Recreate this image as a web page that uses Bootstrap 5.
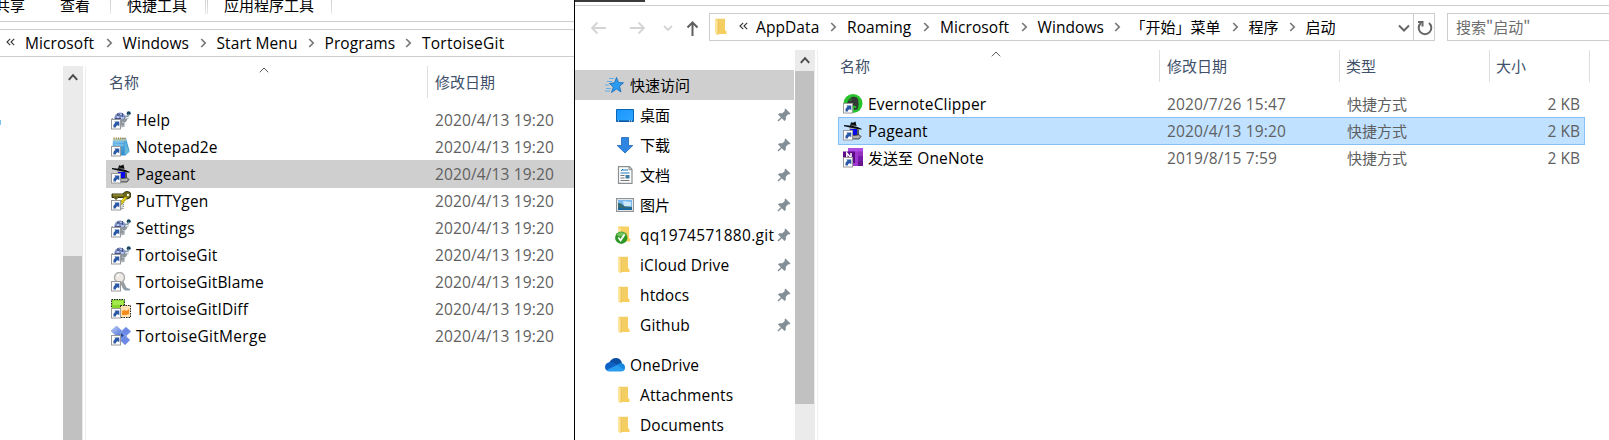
<!DOCTYPE html>
<html lang="zh-CN">
<head>
<meta charset="utf-8">
<title>启动</title>
<link rel="stylesheet" href="https://cdn.jsdelivr.net/npm/bootstrap@5.3.0/dist/css/bootstrap.min.css">
<script src="https://cdn.jsdelivr.net/npm/bootstrap@5.3.0/dist/js/bootstrap.bundle.min.js"></script>
<style>
body{width:1609px;height:440px;overflow:hidden;background:#fff;color:#000;font-family:"Open Sans","Noto Sans CJK SC",sans-serif;font-size:15.5px;line-height:20px;white-space:nowrap}
svg{display:block;flex:none}
.zh{font-family:"Noto Sans CJK SC",sans-serif;font-size:15px;letter-spacing:0}
.win-left{width:574px;height:440px}
.win-right{width:1035px;height:440px;border-left:1px solid #000}
.ribbon{height:22px;border-bottom:1px solid #cdcdcd}
.ribbon span{line-height:20px;margin-top:-5px;flex:none}
.ribbon .r1{width:65px;margin-left:-5px}.ribbon .r2{width:50px}.ribbon .r3{width:94px}.ribbon .r4{width:123px}
.ribbon i{width:1px;height:14px;flex:none;background:linear-gradient(#d0d0d0,#e6e6e6)}
.addr-left{height:28px;margin-top:7px;border-top:1px solid #cdcdcd;border-bottom:1px solid #cdcdcd}
.addr-left,.box{padding-bottom:1px}
.crumb{display:flex;align-items:center;letter-spacing:.08px}
.crumb.zh{letter-spacing:0}
.crumb svg{margin-left:auto;margin-right:10px}
.w91{width:91px}.w93{width:93px}.w94{width:94px}.w97{width:97.5px}.w108{width:108px}.w118{width:118px}.w57{width:57px}
.tree-left{width:63px}
.sbar{width:20px;background:#ebebeb}
.thumb{width:19px;background:#c1c1c1}
.gutter{width:3px;margin-right:0;border-right:1px solid #efefef}
.files-left{width:468px;margin-left:20px}
.hd{color:#40506a}
.hd>div{height:32px;border-right:1px solid #dedede;position:relative;line-height:32px}
.hd .caret{position:absolute;top:1px}
.g-left{display:grid;grid-template-columns:322px 1fr}
.g-right{display:grid;grid-template-columns:322px 180px 150px 100px}
.item{height:28px;margin-bottom:-1px;align-items:center;border:1px solid transparent;position:relative}
.item>:first-child{display:flex;align-items:center;padding-left:4px;gap:5px;letter-spacing:.15px}
.item>:not(:first-child){padding-left:6px;color:#5f5f5f}
.item>.size{padding-left:0;padding-right:7px;text-align:right;width:96px}
.item.off{background:#cfcfcf}
.item.on{background:#c0e1ff;border-color:#85c1f7}
.item>.date{letter-spacing:.13px}
.topbar{height:6px;border-bottom:1px solid #cdcdcd}
.topbar div{width:70px;height:2px;background:#3b3b3b}
.box{height:28px;border:1px solid #cdcdcd}
.navrow{margin-top:7px;height:28px}
.side{width:219px;letter-spacing:.12px}
.side>div{height:30px;display:flex;align-items:center}
.side .top{padding-left:30px;gap:5px}
.side .top.sel{background:#cfcfcf}
.side .sub{padding-left:40px;gap:5px}
.side .long{letter-spacing:.3px}
.side .pin{position:absolute;left:777px}
.dot{width:1px;height:5px;background:#7cc4ee;margin-top:54px}
</style>
</head>
<body class="d-flex">
<svg width="0" height="0" class="position-absolute">
<defs>
<linearGradient id="gf" x1="0" x2="1" y2="1"><stop offset="0" stop-color="#f0cd6a"/><stop offset="1" stop-color="#f8cf5c"/></linearGradient>
<linearGradient id="gb" x1="0" x2="1" y2="1"><stop offset="0" stop-color="#80c5ef"/><stop offset="1" stop-color="#1c7fc4"/></linearGradient>
<linearGradient id="gd" x1="0" x2="1" y2="1"><stop offset="0" stop-color="#1a97ff"/><stop offset="1" stop-color="#2ea5ff"/></linearGradient>
<linearGradient id="gm" x1="0" x2="1" y2="1"><stop offset="0" stop-color="#c4d2f5"/><stop offset="1" stop-color="#4a6fd8"/></linearGradient>
<symbol id="sc" viewBox="0 0 20 20"><rect x=".5" y="9.500" width="9" height="9.500" fill="#fff" stroke="#9a9a9a"/><path d="M2.500 17.500c-.4-2.500.4-4 2-4.500L3.300 11.500h5v5L7 15.200C5.500 15.500 4.800 16.300 4.800 17.500z" fill="#2a58a5"/></symbol>
<symbol id="tortoise" viewBox="0 0 20 20"><path d="M3 9Q4 2.500 9 2.500T15 9l-1 3H4z" fill="#8090c4"/><path d="M4 8.500h10M6 5h6M7 3v6M11.500 3v7" stroke="#465484" fill="none"/><path d="M6 6h2v2H6zM9 4h2v1H9zM10 7h3v2h-3z" fill="#b3c3ee"/><circle cx="17.700" cy="3.300" r="2" fill="#164461"/><path d="M14 6.500l3-.5 1-2M2 8.500l-2 1.500" stroke="#8293a5" stroke-width="1.500" fill="none"/><path d="M9 10l4-1.500 4-.5-1.500 3-2 2v3.500l-3 1z" fill="#8e959d"/><path d="M14 8.500l4-.5M11 12l3 1M10 16h4" stroke="#bec8cf"/><use href="#sc"/></symbol>
<symbol id="notepad" viewBox="0 0 20 20"><path d="M2 2l13-1 3.500 13-4 4.500H1z" fill="url(#gb)"/><path d="M14 4l4.500 11-5 3z" fill="#67b7da"/><path d="M4 5h9M4 8h9" stroke="#91d0f3"/><path d="M2.500 1.500h12" stroke="#a8813b" stroke-width="2" stroke-dasharray="1.200 1"/><path d="M2 3h13" stroke="#e5dc9b"/><use href="#sc"/></symbol>
<symbol id="pageant" viewBox="0 0 20 20"><path d="M6 6h10l-1 10-8 1z" fill="#aaa"/><path d="M7 8h7v6H9z" fill="#0808f0"/><path d="M14 8l2 1v6l-2 1z" fill="#555"/><path d="M9 15l7-1.500 2 2-2 2.500H9z" fill="#999" stroke="#333" stroke-width=".8"/><path d="M10 16h6" stroke="#ccc"/><path d="M7 5L8 1.300l2 .5 2.500-1.300 1 4.500z" fill="#0a0d10"/><path d="M1 4l7 .8 5 .8 5.500 2.200v1L12 7.500 1 5.300z" fill="#0a0d10"/><path d="M8 4l5 1" stroke="#888" stroke-width=".7"/><use href="#sc"/></symbol>
<symbol id="puttygen" viewBox="0 0 20 20"><path d="M1 3h11q1-2.500 4-2.500 4 0 4 3.500t-4 4q-3 0-4-1.500H7l-2 2-2-2H1z" fill="#6b6919" stroke="#35340d"/><path d="M2 4h10" stroke="#aaa349"/><circle cx="17" cy="4" r="1.200" fill="#fff"/><path d="M8 10h5l-1 8H9z" fill="#d7d7d7" stroke="#777" stroke-dasharray="1 1"/><path d="M14 6l-5 5 2.500-.5L9 15l5.500-6-2 .5 4-3z" fill="#ffed19" stroke="#928a00" stroke-width=".6"/><use href="#sc"/></symbol>
<symbol id="blame" viewBox="0 0 20 20"><path d="M12 8l4 9-3 1-4-7z" fill="#9b9d9f"/><path d="M11 15l4 .5 4 1.500v1.500h-5z" fill="#8d9ead"/><circle cx="8.500" cy="5.500" r="5" fill="#eeeae3" stroke="#afb0b0" stroke-width="1.500"/><path d="M6 4l2-1.500" stroke="#fff" stroke-width="2"/><use href="#sc"/></symbol>
<symbol id="idiff" viewBox="0 0 20 20"><path d="M.5 .5h13v12H.5z" fill="#87d52b" stroke="#222" stroke-dasharray="1.500 1"/><path d="M2 2h10v4H2z" fill="#a5ea4d"/><path d="M9.500 6.500h10v12h-10z" fill="#ffe0b0" stroke="#222" stroke-dasharray="1.500 1"/><path d="M11 16v-4l3-1 1.500 1 2.500-2v5l-3 1z" fill="#f58b1b"/><use href="#sc"/></symbol>
<symbol id="merge" viewBox="0 0 20 20"><path d="M10 6l4 4-5 5M6 7l9 9" stroke="#4771d2" stroke-width="3"/><g fill="url(#gm)" stroke="#7e9de1" stroke-width=".7"><path d="M5.500 0L11 5 5.500 10 0 5z"/></g><path d="M15 1l5 4.500-5 4.500-5-4.500zM14 9.500l5 4.500-5 5-5-5z" fill="#6a88e4" stroke="#9db4ee" stroke-width=".7"/><use href="#sc"/></symbol>
<symbol id="evernote" viewBox="0 0 20 20"><circle cx="10" cy="9.500" r="9.500" fill="#27c32d"/><path d="M5 6.500L8.500 3q5-1 6.500 2 1.200 5 0 9.500-1 2-4 1v-2l2 .5.300-1.500-2.500-1-2 1.500-4-1q-1.300-3 .2-5.500z" fill="#333a36"/><path d="M5.500 6.500H8V4" stroke="#27a932" fill="none" stroke-width=".6"/><use href="#sc"/></symbol>
<symbol id="onenote" viewBox="0 0 20 20"><path d="M5 0h15v18H5z" fill="#ae4be5"/><path d="M15 3.500h5V8h-5z" fill="#9332bf"/><path d="M15 8h5v5h-5z" fill="#7719aa"/><path d="M5 13h15v5H5z" fill="#67158f"/><path d="M5 3.500h10V18H5z" fill="#9c37cf"/><path d="M0 3.500h12V15H0z" fill="#5c0b86"/><path d="M3.800 10V5l4.200 5V5" stroke="#fff" stroke-width="1.500" fill="none"/><use href="#sc"/></symbol>
<symbol id="folder" viewBox="0 0 18 18"><path d="M2.500.8H12V12l1.500 1.500V16H5z" fill="url(#gf)"/><path d="M2 1l3 2v14.500l-3-2z" fill="#ffe599"/><path d="M5 3v14" stroke="#e5bb51" stroke-width=".7"/></symbol>
<symbol id="chev" viewBox="0 0 7 10"><path d="M1.200 1l4 4-4 4" fill="none" stroke="#777" stroke-width="1.700"/></symbol>
<symbol id="pin" viewBox="0 0 14 14"><path d="M8.500.5l5 5-1.300 1-1-.2-2.400 2.400v3L7.500 13 4.800 10.200 1.500 13.500.5 12.500 3.800 9.200 1 6.500l1.300-1.200h3l2.500-2.400-.3-1.200z" fill="#838f96"/></symbol>
<symbol id="caret" viewBox="0 0 10 6"><path d="M.8 5.300L5 1l4.200 4.300" fill="none" stroke="#5c5c5c" stroke-width="1"/></symbol>
<symbol id="up" viewBox="0 0 10 8"><path d="M.8 6.800L5 2.200l4.200 4.600" fill="none" stroke="#4b4b4b" stroke-width="2"/></symbol>
<symbol id="laquo" viewBox="0 0 9 8"><path d="M4.200.8L1 4l3.200 3.200M8.200.8L5 4l3.200 3.200" fill="none" stroke="#333" stroke-width="1.100"/></symbol>
</defs>
</svg>

<section class="win-left d-flex flex-column overflow-hidden flex-shrink-0">
  <div class="ribbon d-flex zh overflow-hidden flex-shrink-0"><span class="r1">共享</span><span class="r2">查看</span><i></i><span class="r3 ps-3">快捷工具</span><i></i><i style="margin-left:1px"></i><span class="r4 ps-3">应用程序工具</span><i></i></div>
  <nav class="addr-left d-flex align-items-center flex-shrink-0">
    <svg width="9" height="8" style="margin:0 10px 1px 6px"><use href="#laquo"/></svg>
    <div class="crumb w97">Microsoft<svg width="7" height="10"><use href="#chev"/></svg></div>
    <div class="crumb w94">Windows<svg width="7" height="10"><use href="#chev"/></svg></div>
    <div class="crumb w108">Start Menu<svg width="7" height="10"><use href="#chev"/></svg></div>
    <div class="crumb w97">Programs<svg width="7" height="10"><use href="#chev"/></svg></div>
    <div class="crumb" style="letter-spacing:.25px">TortoiseGit</div>
  </nav>
  <div class="d-flex flex-grow-1" style="margin-top:9px">
    <div class="tree-left"><div class="dot"></div></div>
    <div class="sbar d-flex flex-column"><svg width="10" height="8" class="mx-auto" style="margin-top:7px"><use href="#up"/></svg><div class="thumb mt-auto" style="height:184px"></div></div>
    <div class="gutter"></div>
    <div class="files-left">
      <div class="hd g-left zh"><div style="padding-left:3px">名称<svg class="caret" style="left:153px" width="10" height="6"><use href="#caret"/></svg></div><div class="border-0" style="padding-left:7px">修改日期</div></div>
      <div style="margin-top:8px">
        <div class="item g-left"><div><svg width="20" height="20"><use href="#tortoise"/></svg>Help</div><div class="date">2020/4/13 19:20</div></div>
        <div class="item g-left"><div><svg width="20" height="20"><use href="#notepad"/></svg>Notepad2e</div><div class="date">2020/4/13 19:20</div></div>
        <div class="item g-left off"><div><svg width="20" height="20"><use href="#pageant"/></svg>Pageant</div><div class="date">2020/4/13 19:20</div></div>
        <div class="item g-left"><div><svg width="20" height="20"><use href="#puttygen"/></svg>PuTTYgen</div><div class="date">2020/4/13 19:20</div></div>
        <div class="item g-left"><div><svg width="20" height="20"><use href="#tortoise"/></svg>Settings</div><div class="date">2020/4/13 19:20</div></div>
        <div class="item g-left"><div><svg width="20" height="20"><use href="#tortoise"/></svg>TortoiseGit</div><div class="date">2020/4/13 19:20</div></div>
        <div class="item g-left"><div><svg width="20" height="20"><use href="#blame"/></svg>TortoiseGitBlame</div><div class="date">2020/4/13 19:20</div></div>
        <div class="item g-left"><div><svg width="20" height="20"><use href="#idiff"/></svg>TortoiseGitIDiff</div><div class="date">2020/4/13 19:20</div></div>
        <div class="item g-left"><div style="letter-spacing:.3px"><svg width="20" height="20"><use href="#merge"/></svg>TortoiseGitMerge</div><div class="date">2020/4/13 19:20</div></div>
      </div>
    </div>
  </div>
</section>

<section class="win-right d-flex flex-column overflow-hidden flex-shrink-0">
  <div class="topbar flex-shrink-0"><div></div></div>
  <div class="navrow d-flex align-items-center flex-shrink-0">
    <svg width="134" height="28" viewBox="575 13 134 28" fill="none" stroke="#d4d4d4" stroke-width="1.800"><path d="M606 28H592.500M597.500 22.500L592 28l5.500 5.500M630 28h13.500M638.500 22.500L644 28l-5.500 5.500M664 26l4 4 4-4"/><path d="M692.500 36V22.500M687.500 27.500l5-5 5 5" stroke="#5f5f5f" stroke-width="2"/></svg>
    <div class="box d-flex align-items-center" style="width:726px">
      <svg width="18" height="18" style="margin:0 11px 0 3px"><use href="#folder"/></svg>
      <svg width="9" height="8" style="margin:0 8px 1px -3px"><use href="#laquo"/></svg>
      <div class="crumb w91">AppData<svg width="7" height="10"><use href="#chev"/></svg></div>
      <div class="crumb w93">Roaming<svg width="7" height="10"><use href="#chev"/></svg></div>
      <div class="crumb w97">Microsoft<svg width="7" height="10"><use href="#chev"/></svg></div>
      <div class="crumb w93">Windows<svg width="7" height="10"><use href="#chev"/></svg></div>
      <div class="crumb w118 zh">「开始」菜单<svg width="7" height="10"><use href="#chev"/></svg></div>
      <div class="crumb w57 zh">程序<svg width="7" height="10"><use href="#chev"/></svg></div>
      <div class="crumb zh">启动</div>
      <svg class="ms-auto" width="36" height="26" viewBox="1398 14 36 26" fill="none" stroke="#666" stroke-width="2"><path d="M1399 25.500l5 5 5-5"/><path d="M1413.500 14v26" stroke="#cdcdcd" stroke-width="1"/><path d="M1421 23a6.300 6.300 0 1 0 8 0"/><path d="M1418 22h4.500v4.500"/></svg>
    </div>
    <div class="box zh d-flex align-items-center ps-2 flex-grow-1" style="margin-left:12px;color:#6d6d6d;border-right:0"><span>搜索"启动"</span></div>
  </div>
  <div class="d-flex flex-grow-1" style="margin-top:9px">
    <div class="side" style="padding-top:20px">
      <div class="top sel"><svg width="20" height="18" viewBox="0 0 20 18"><path d="M11.500 1.500l2 5 5 .3-4 3.500 1.500 5.700-4.500-3-5 3.500L8.300 11 4.500 7.500l5-.7z" fill="#2b9cf2" stroke="#1369b5" stroke-width=".8"/><path d="M4 2.500h5M2 5.500h5M0 9h4M1 12.500h5M0 15h5" stroke="#65aee5"/></svg><span class="zh">快速访问</span></div>
      <div class="sub"><svg width="20" height="18" viewBox="0 0 20 18"><path d="M1.500 3.500h17v12h-17z" fill="url(#gd)" stroke="#0965b5"/><path d="M2 15h16" stroke="#074a8b"/><path d="M3 15h1m10 0h1m1 0h1" stroke="#fff"/></svg><span class="zh">桌面</span><svg class="pin" width="14" height="14"><use href="#pin"/></svg></div>
      <div class="sub"><svg width="20" height="18" viewBox="0 0 20 18"><path d="M6.500 1.500h7v8h4.300l-7.800 7.500-7.800-7.500h4.300z" fill="#2f86e2" stroke="#1a66b5" stroke-width=".8"/></svg><span class="zh">下载</span><svg class="pin" width="14" height="14"><use href="#pin"/></svg></div>
      <div class="sub"><svg width="20" height="18" viewBox="0 0 20 18"><path d="M3.500.7h11l2.500 2.800v13.800H3.500z" fill="#fff" stroke="#8a8f92" stroke-width="1.200"/><path d="M14 .7v3h3" fill="none" stroke="#8a8f92"/><path d="M6 5l2-2v2m1-1h4M5.500 7h9" stroke="#1977bd" fill="none"/><path d="M5.500 9.500h4M5.500 12h4M5.500 14.500h9" stroke="#777"/><path d="M10.500 9h4v3.500h-4z" fill="#3c7aa4"/></svg><span class="zh">文档</span><svg class="pin" width="14" height="14"><use href="#pin"/></svg></div>
      <div class="sub"><svg width="20" height="18" viewBox="0 0 20 18"><path d="M1.600 2.600h16.800v12.800H1.600z" fill="#fff" stroke="#8f9498" stroke-width="1.200"/><path d="M3 4h14v10H3z" fill="#78b7ed"/><path d="M8 5l8 1v4H9z" fill="#cce8f8"/><path d="M3 7l3 .5 4 3 7 .5v3H3z" fill="#356c74"/><path d="M3 12h14v2H3z" fill="#18669e"/></svg><span class="zh">图片</span><svg class="pin" width="14" height="14"><use href="#pin"/></svg></div>
      <div class="sub"><svg width="20" height="18" viewBox="0 0 20 18"><path d="M3 .5h11v11l1.300 1.500v2.500H3z" fill="#f7cf62"/><path d="M3 1l3 2v12H3z" fill="#ffe599"/><circle cx="6.300" cy="11.700" r="6.200" fill="#2d9726"/><path d="M1.500 9a5 4 0 0 1 9.500 0q-5 3-9.500 0" fill="#70c45b"/><path d="M3.300 11.500l2.300 3L9.500 8.500" fill="none" stroke="#fff" stroke-width="1.800"/></svg><span class="long">qq1974571880.git</span><svg class="pin" width="14" height="14"><use href="#pin"/></svg></div>
      <div class="sub"><svg width="20" height="18" viewBox="-1 0 20 18"><use href="#folder" width="18" height="18"/></svg><span>iCloud Drive</span><svg class="pin" width="14" height="14"><use href="#pin"/></svg></div>
      <div class="sub"><svg width="20" height="18" viewBox="-1 0 20 18"><use href="#folder" width="18" height="18"/></svg><span>htdocs</span><svg class="pin" width="14" height="14"><use href="#pin"/></svg></div>
      <div class="sub"><svg width="20" height="18" viewBox="-1 0 20 18"><use href="#folder" width="18" height="18"/></svg><span>Github</span><svg class="pin" width="14" height="14"><use href="#pin"/></svg></div>
      <div class="top" style="margin-top:10px"><svg width="20" height="14" viewBox="0 0 20 14"><path d="M4 5q2.500-5 7-5 4.500 0 6 5l-7 4z" fill="#0b4ea3"/><path d="M4.500 13Q0 13 0 9t5-5q3-.5 7 3L8 12z" fill="#0f62c5"/><path d="M12 6.500L16 5q4 .5 4 4.500t-4 3.500h-4z" fill="#1687de"/><path d="M1.500 12L12 7l7.500 4.500Q18.500 13.500 16 13.500H4.500q-2 0-3-1.500z" fill="#2b9df0"/></svg><span>OneDrive</span></div>
      <div class="sub"><svg width="20" height="18" viewBox="-1 0 20 18"><use href="#folder" width="18" height="18"/></svg><span>Attachments</span></div>
      <div class="sub"><svg width="20" height="18" viewBox="-1 0 20 18"><use href="#folder" width="18" height="18"/></svg><span>Documents</span></div>
    </div>
    <div class="sbar d-flex flex-column" style="margin-left:1px"><svg width="10" height="8" class="mx-auto" style="margin-top:6px;margin-bottom:7px"><use href="#up"/></svg><div class="thumb" style="height:333px"></div></div>
    <div class="gutter"></div>
    <div style="width:771px;margin-left:20px">
      <div class="hd g-right zh"><div style="padding-left:2px">名称<svg class="caret" style="left:153px" width="10" height="6"><use href="#caret"/></svg></div><div style="padding-left:7px">修改日期</div><div style="padding-left:6px">类型</div><div style="padding-left:6px">大小</div></div>
      <div style="margin-top:8px;width:747px">
        <div class="item g-right"><div><svg width="20" height="20"><use href="#evernote"/></svg>EvernoteClipper</div><div class="date">2020/7/26 15:47</div><div class="zh">快捷方式</div><div class="size">2 KB</div></div>
        <div class="item g-right on"><div><svg width="20" height="20"><use href="#pageant"/></svg>Pageant</div><div class="date">2020/4/13 19:20</div><div class="zh">快捷方式</div><div class="size">2 KB</div></div>
        <div class="item g-right"><div><svg width="20" height="20"><use href="#onenote"/></svg><span><span class="zh">发送至</span> OneNote</span></div><div class="date">2019/8/15 7:59</div><div class="zh">快捷方式</div><div class="size">2 KB</div></div>
      </div>
    </div>
  </div>
</section>
</body>
</html>
